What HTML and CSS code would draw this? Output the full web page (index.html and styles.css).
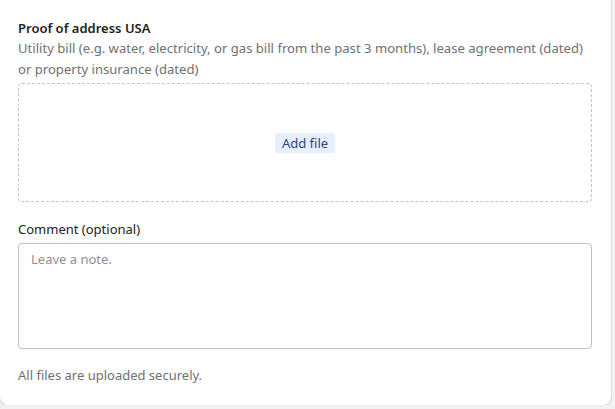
FILE: index.html
```html
<!DOCTYPE html>
<html lang="en">
<head>
<meta charset="utf-8">
<title>Proof of address</title>
<link rel="stylesheet" href="styles.css">
</head>
<body>
<div class="card">
  <div class="field">
    <div class="title">Proof of address USA</div>
    <div class="desc">Utility bill (e.g. water, electricity, or gas bill from the past 3 months), lease agreement (dated) or property insurance (dated)</div>
  </div>
  <div class="dropzone">
    <button class="add-btn" type="button">Add file</button>
  </div>
  <label class="label" for="note">Comment (optional)</label>
  <textarea id="note" class="note" placeholder="Leave a note."></textarea>
  <p class="footer">All files are uploaded securely.</p>
</div>
</body>
</html>
```
FILE: styles.css
```css
html, body {
  margin: 0;
  padding: 0;
  background: #f1f1f1;
}
body {
  font-family: "Noto Sans", "Open Sans", sans-serif;
  font-size: 13px;
  color: #202223;
}
.card {
  width: 611px;
  box-sizing: border-box;
  margin-top: -10px;
  padding: 28px 19px 20px 18px;
  background: #ffffff;
  border-radius: 0 0 8px 8px;
  box-shadow: 0 0 0 1px rgba(0,0,0,0.06), 0 1px 2px rgba(0,0,0,0.1);
}
.title {
  font-weight: 600;
  line-height: 20px;
}
.desc {
  color: #6d7175;
  font-size: 13.1px;
  line-height: 21px;
}
.dropzone {
  margin-top: 3px;
  height: 119px;
  box-sizing: border-box;
  border: 1px dashed #c4c4c4;
  border-radius: 4px;
  display: flex;
  align-items: center;
  justify-content: center;
}
.add-btn {
  font: inherit;
  font-size: 13px;
  line-height: 18px;
  color: #2a4682;
  background: #e6effd;
  border: none;
  border-radius: 3px;
  padding: 1px 7px;
}
.label {
  display: block;
  margin-top: 17px;
  line-height: 20px;
  font-weight: 400;
}
.note {
  display: block;
  margin-top: 4px;
  width: 100%;
  height: 106px;
  box-sizing: border-box;
  border: 1px solid #c0c0c0;
  border-radius: 4px;
  padding: 6px 12px;
  font: inherit;
  font-size: 13px;
  line-height: 18px;
  resize: none;
  color: #202223;
}
.note::placeholder {
  color: #8c9196;
}
.footer {
  margin: 16px 0 0;
  color: #6d7175;
  line-height: 20px;
}
```
